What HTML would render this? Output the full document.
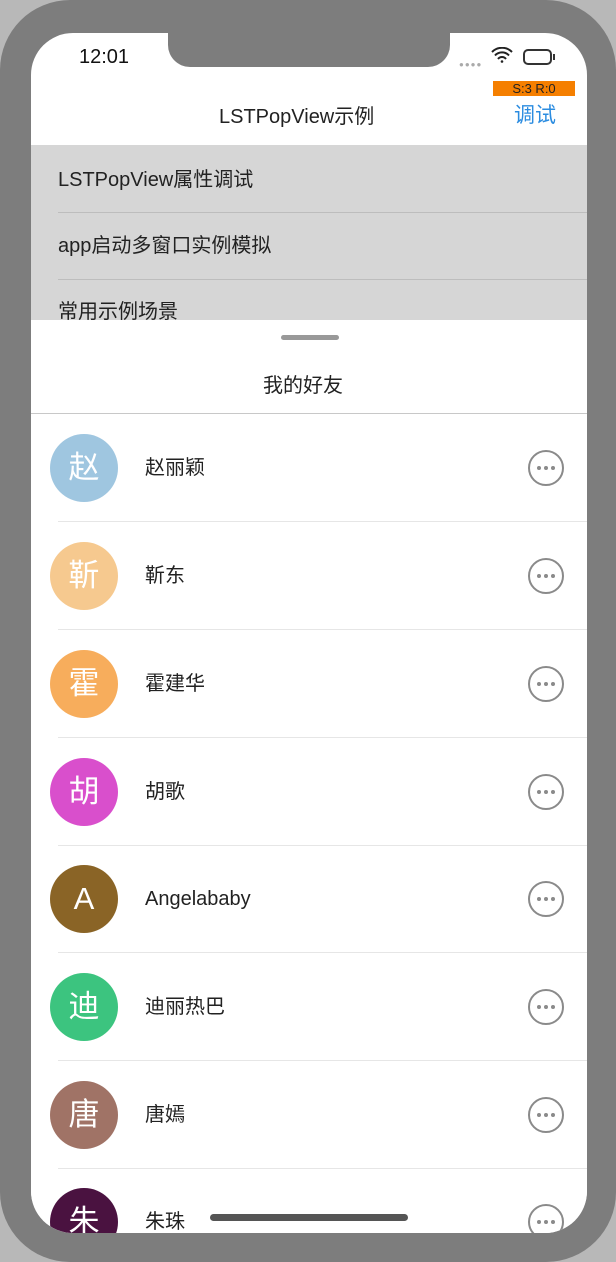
<!DOCTYPE html>
<html><head><meta charset="utf-8"><style>
*{margin:0;padding:0;box-sizing:border-box}
body{width:616px;height:1262px;overflow:hidden;background:#b8b8b8;position:relative;font-family:"Liberation Sans","Noto Sans CJK SC",sans-serif}
.bez{position:absolute;left:0;top:0;width:616px;height:1262px;border-radius:70px;background:#7d7d7d}
.scr{position:absolute;left:31px;top:33px;width:556px;height:1200px;border-radius:42px;background:#fff;overflow:hidden}
.notch{position:absolute;left:137px;top:-2px;width:282px;height:36px;background:#7d7d7d;border-radius:0 0 22px 22px}
.t{position:absolute;white-space:nowrap;line-height:24px}
.gray{position:absolute;left:0;top:112px;width:556px;height:176px;background:#d6d6d6}
.sep{position:absolute;height:1px;background:#bdbdbd}
.row{position:absolute;left:0;width:556px;height:108px}
.av{position:absolute;left:19px;width:68px;height:68px;border-radius:50%;color:#fff;font-size:31px;text-align:center;line-height:68px}
.nm{position:absolute;left:114px;font-size:20px;color:#222}
.more{position:absolute;left:497px;width:36px;height:36px;border-radius:50%;border:2px solid #8a8a8a}
.more i{position:absolute;top:14px;width:4px;height:4px;border-radius:50%;background:#8a8a8a}
.ln{position:absolute;left:27px;width:529px;height:1px;background:#e6e6e6}
</style></head><body>
<div class="bez"></div>
<div class="scr">
 <div class="notch"></div>
 <div class="t" style="left:48px;top:12px;font-size:20px;color:#111">12:01</div>
 <div class="t" style="left:428px;top:20px;font-size:8px;color:#aaa;letter-spacing:1px">●●●●</div>
 <svg style="position:absolute;left:460px;top:14px" width="22" height="16" viewBox="0 0 22 16"><path d="M1 5a14 14 0 0 1 20 0M4 8.5a9.5 9.5 0 0 1 14 0M7 12a5 5 0 0 1 8 0" stroke="#222" stroke-width="2" fill="none"/><circle cx="11" cy="14.5" r="1.3" fill="#222"/></svg>
 <div style="position:absolute;left:492px;top:16px;width:29px;height:16px;border:2px solid #333;border-radius:5px"></div>
 <div style="position:absolute;left:522px;top:21px;width:2px;height:6px;background:#333"></div>
 <div class="t" style="left:462px;top:48px;width:82px;height:15px;background:#f57f00;color:#222;font-size:13px;text-align:center;line-height:15px">S:3 R:0</div>
 <div class="t" style="left:188px;top:72px;font-size:20px;color:#222">LSTPopView示例</div>
 <div class="t" style="left:483px;top:71px;font-size:21px;color:#2b8ce0">调试</div>
 <div class="gray">
  <div class="t" style="left:27px;top:23px;font-size:20px;color:#222">LSTPopView属性调试</div>
  <div class="sep" style="left:27px;top:67px;width:529px"></div>
  <div class="t" style="left:27px;top:89px;font-size:20px;color:#222">app启动多窗口实例模拟</div>
  <div class="sep" style="left:27px;top:134px;width:529px"></div>
  <div class="t" style="left:27px;top:155px;font-size:20px;color:#222">常用示例场景</div>
 </div>
 <div style="position:absolute;left:0;top:287px;width:556px;height:920px;background:#fff">
  <div style="position:absolute;left:250px;top:15px;width:58px;height:5px;border-radius:3px;background:#999"></div>
  <div class="t" style="left:232px;top:54px;font-size:20px;color:#222">我的好友</div>
  <div style="position:absolute;left:0;top:93px;width:556px;height:1px;background:#c8c8c8"></div>
 </div>
 <div class="row" style="top:381px"><div class="av" style="top:20px;background:#9fc6e0">赵</div><div class="t nm" style="top:42px">赵丽颖</div><div class="more" style="top:36px"><i style="left:7px"></i><i style="left:14px"></i><i style="left:21px"></i></div><div class="ln" style="top:107px"></div></div>
 <div class="row" style="top:489px"><div class="av" style="top:20px;background:#f6c98f">靳</div><div class="t nm" style="top:42px">靳东</div><div class="more" style="top:36px"><i style="left:7px"></i><i style="left:14px"></i><i style="left:21px"></i></div><div class="ln" style="top:107px"></div></div>
 <div class="row" style="top:597px"><div class="av" style="top:20px;background:#f7ad5c">霍</div><div class="t nm" style="top:42px">霍建华</div><div class="more" style="top:36px"><i style="left:7px"></i><i style="left:14px"></i><i style="left:21px"></i></div><div class="ln" style="top:107px"></div></div>
 <div class="row" style="top:705px"><div class="av" style="top:20px;background:#d94fcc">胡</div><div class="t nm" style="top:42px">胡歌</div><div class="more" style="top:36px"><i style="left:7px"></i><i style="left:14px"></i><i style="left:21px"></i></div><div class="ln" style="top:107px"></div></div>
 <div class="row" style="top:812px"><div class="av" style="top:20px;background:#8a6426">A</div><div class="t nm" style="top:42px">Angelababy</div><div class="more" style="top:36px"><i style="left:7px"></i><i style="left:14px"></i><i style="left:21px"></i></div><div class="ln" style="top:107px"></div></div>
 <div class="row" style="top:920px"><div class="av" style="top:20px;background:#3cc47f">迪</div><div class="t nm" style="top:42px">迪丽热巴</div><div class="more" style="top:36px"><i style="left:7px"></i><i style="left:14px"></i><i style="left:21px"></i></div><div class="ln" style="top:107px"></div></div>
 <div class="row" style="top:1028px"><div class="av" style="top:20px;background:#a07366">唐</div><div class="t nm" style="top:42px">唐嫣</div><div class="more" style="top:36px"><i style="left:7px"></i><i style="left:14px"></i><i style="left:21px"></i></div><div class="ln" style="top:107px"></div></div>
 <div class="row" style="top:1135px"><div class="av" style="top:20px;background:#4a1240">朱</div><div class="t nm" style="top:42px">朱珠</div><div class="more" style="top:36px"><i style="left:7px"></i><i style="left:14px"></i><i style="left:21px"></i></div></div>
 <div style="position:absolute;left:179px;top:1181px;width:198px;height:7px;border-radius:4px;background:#555"></div>
</div>
</body></html>
